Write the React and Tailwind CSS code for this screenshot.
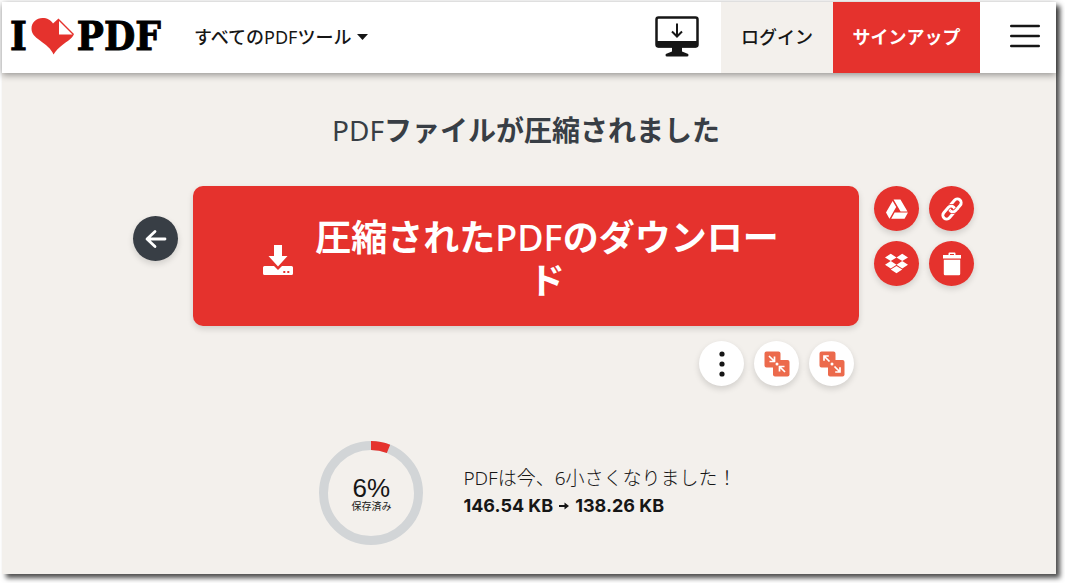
import { FaDropbox, FaGoogleDrive } from "react-icons/fa";

const stats = { saved: 6, before: "146.54 KB", after: "138.26 KB" };

// Latin letters are set lighter than the Japanese around them
function Latin({ children, className = "" }) {
  return (
    <span className={`font-['Noto_Sans','Open_Sans',sans-serif] ${className}`}>
      {children}
    </span>
  );
}

function RoundButton({ label, className, children }) {
  return (
    <button
      type="button"
      aria-label={label}
      className={`flex size-[45px] shrink-0 items-center justify-center rounded-full shadow-[0_3px_6px_rgba(0,0,0,0.14)] cursor-pointer ${className}`}
    >
      {children}
    </button>
  );
}

function Logo() {
  return (
    <a
      href="#home"
      className="flex w-[184px] shrink-0 items-center pb-1 pl-2 font-['DejaVu_Serif_Condensed','DejaVu_Serif',serif] text-[40px] leading-10 font-bold text-black"
    >
      <span className="[-webkit-text-stroke:1px_black]">I</span>
      <svg viewBox="0 0 44 38" className="ml-1 h-[38px] w-11 shrink-0" aria-label="love">
        <path
          d="M22.500 37.500C20 31.500 15 28 9 23.500 3.500 19.500.5 16.500.5 11.500.5 5.500 5.500 1 11.500 1c4.500 0 8.500 2 10.500 5.500L27.500 1.500 43 17c-2 5-6.500 7-11 10.500-4.500 3.500-7 6-9.500 10z"
          fill="#e5322d"
        />
        <path d="M28 4v13.500h13.500z" fill="#fff" />
      </svg>
      <span className="ml-0.5 [-webkit-text-stroke:1px_black]">PDF</span>
    </a>
  );
}

function MonitorIcon() {
  return (
    <svg viewBox="0 0 44 42" className="h-[42px] w-11" fill="none">
      <rect x="1.500" y="1.500" width="41" height="29" rx="2" stroke="#161616" strokeWidth="2.500" />
      <path d="M1.500 25h41v4.500a2 2 0 0 1-2 2h-37a2 2 0 0 1-2-2z" fill="#161616" />
      <path d="M17 31h10v4.500l5 2a1.500 1.500 0 0 1 0 3H12a1.500 1.500 0 0 1 0-3l5-2z" fill="#161616" />
      <path d="M22 7.500v13M17 15.500l5 5 5-5" stroke="#161616" strokeWidth="2" />
    </svg>
  );
}

function Header() {
  return (
    <header className="relative flex h-[71px] items-center bg-white shadow-[0_2px_7px_rgba(0,0,0,0.4)]">
      <Logo />
      <nav className="ml-2 flex-1 pb-0.5">
        <button type="button" className="flex items-center text-lg font-medium cursor-pointer">
          <span>
            すべての<Latin className="font-normal">PDF</Latin>ツール
          </span>
          <svg viewBox="0 0 11 6" className="ml-1.5 h-1.5 w-[11px]" fill="#161616">
            <path d="M0 0h11L5.500 6z" />
          </svg>
        </button>
      </nav>
      <a href="#desktop" aria-label="デスクトップ" className="mr-[22px] pb-0.5">
        <MonitorIcon />
      </a>
      <a
        href="#login"
        className="flex h-full w-28 items-center justify-center bg-[#f3f0ec] pb-1 text-lg font-medium"
      >
        ログイン
      </a>
      <a
        href="#signup"
        className="flex h-full w-[147px] items-center justify-center bg-[#e5322d] pb-1 text-lg font-bold text-white"
      >
        サインアップ
      </a>
      <button type="button" aria-label="メニュー" className="pr-4 pb-1 pl-[30px] cursor-pointer">
        <svg viewBox="0 0 30 24" className="h-6 w-[30px]" stroke="#161616" strokeWidth="2.400" strokeLinecap="round">
          <path d="M1.200 2h27.600M1.200 12h27.600M1.200 22h27.600" />
        </svg>
      </button>
    </header>
  );
}

function BackIcon() {
  return (
    <svg viewBox="0 0 22 20" className="h-5 w-[22px]" fill="none" stroke="#fff" strokeWidth="2.800" strokeLinecap="round" strokeLinejoin="round">
      <path d="M10 2.500L2 10l8 7.500M2.500 10H20" />
    </svg>
  );
}

function DownloadIcon() {
  return (
    <svg viewBox="0 0 30 30" className="h-[30px] w-[30px] shrink-0" fill="#fff">
      <path d="M11 0h8v11h5.500L15 21.500 5.500 11H11z" />
      <path
        fillRule="evenodd"
        d="M1.500 21H11l4 4 4-4h9.500a1.500 1.500 0 0 1 1.500 1.500v6a1.500 1.500 0 0 1-1.500 1.500h-27A1.500 1.500 0 0 1 0 28.500v-6A1.500 1.500 0 0 1 1.500 21zM20.300 26v2h2v-2zM24.300 26v2h2v-2z"
      />
    </svg>
  );
}

function ChainIcon() {
  return (
    <svg viewBox="-12 -12 24 24" className="size-6" fill="none">
      <g transform="rotate(-49)">
        <rect x="-2.500" y="-3.800" width="14.500" height="7.600" rx="3.800" stroke="#fff" strokeWidth="2.900" />
        <rect x="-12" y="-3.800" width="14.500" height="7.600" rx="3.800" stroke="#e5322d" strokeWidth="4.400" />
        <rect x="-12" y="-3.800" width="14.500" height="7.600" rx="3.800" stroke="#fff" strokeWidth="2.900" />
        <path d="M3.500 3.800H1.300a3.800 3.800 0 0 1-3.800-3.800" stroke="#e5322d" strokeWidth="4.400" />
        <path d="M4.500 3.800H1.300a3.800 3.800 0 0 1-3.800-3.800" stroke="#fff" strokeWidth="2.900" />
      </g>
    </svg>
  );
}

function TrashIcon() {
  return (
    <svg viewBox="0 0 18 24" className="h-6 w-[18px]" fill="#fff">
      <path d="M5.500 3V1.500A1 1 0 0 1 6.500.5h5a1 1 0 0 1 1 1V3H18v3.500H0V3zM7 3h4V2H7z" fillRule="evenodd" />
      <path d="M.8 7.800h16.400V22a1.200 1.200 0 0 1-1.200 1.200H2A1.200 1.200 0 0 1 .8 22z" />
    </svg>
  );
}

function MoreIcon() {
  return (
    <svg viewBox="0 0 6 26" className="h-[26px] w-1.5" fill="#161616">
      <circle cx="3" cy="3" r="2.600" />
      <circle cx="3" cy="13" r="2.600" />
      <circle cx="3" cy="23" r="2.600" />
    </svg>
  );
}

// Two overlapping tiles, arrows pointing in (merge) or out (split)
function TilesIcon({ outward }) {
  return (
    <svg viewBox="0 0 26 26" className="size-[26px]">
      <rect x="9" y="9" width="16.500" height="16.500" rx="2" fill="#ec6a4c" />
      <path d="M2.500.5h12a2 2 0 0 1 2 2V9H11a2 2 0 0 0-2 2v5.500H2.500a2 2 0 0 1-2-2v-12a2 2 0 0 1 2-2z" fill="#ec6a4c" />
      <circle cx="13" cy="13" r="1.500" fill="#fff" />
      <path
        d={
          outward
            ? "M10.500 10.500L5 5M5 9.800V5h4.800M15.500 15.500L21 21M21 16.200V21h-4.800"
            : "M5 5l5 5M10.500 5.500v5H5.500M21 21l-5-5M15.500 20.500v-5h5"
        }
        fill="none"
        stroke="#fff"
        strokeWidth="1.700"
      />
    </svg>
  );
}

function SavedRing({ percent }) {
  const length = 2 * Math.PI * 47.5;
  return (
    <div className="relative size-[104px] shrink-0">
      <svg viewBox="0 0 104 104" className="size-full -rotate-90" fill="none" strokeWidth="9">
        <circle cx="52" cy="52" r="47.500" stroke="#d2d5d7" />
        <circle
          cx="52"
          cy="52"
          r="47.500"
          stroke="#e5322d"
          strokeDasharray={`${(length * percent) / 100} ${length}`}
        />
      </svg>
      <div className="absolute inset-0 flex flex-col items-center justify-center pt-0.5">
        <span className="font-['Liberation_Sans',sans-serif] text-[26px] leading-6">{percent}%</span>
        <span className="text-[10px] leading-3">保存済み</span>
      </div>
    </div>
  );
}

export default function App() {
  return (
    <div className="flex min-h-screen bg-white pt-0.5 pr-[9px] pb-[9px] pl-0.5 font-['Noto_Sans_CJK_JP',sans-serif] text-[#161616]">
      <div className="flex-1 bg-[#f3f0ec] shadow-[4px_4px_5px_rgba(0,0,0,0.7)]">
        <Header />
        <main className="pt-9 pr-1.5">
          <h1 className="text-center text-[28px] leading-10 font-bold text-[#383e45]">
            <Latin className="font-normal">PDF</Latin>ファイルが圧縮されました
          </h1>

          <div className="mt-9 grid grid-cols-[1fr_minmax(0,666px)_1fr] gap-x-[15px]">
            <div className="flex justify-end pt-[30px]">
              <RoundButton label="戻る" className="bg-[#383e45]">
                <BackIcon />
              </RoundButton>
            </div>

            <div>
              <button
                type="button"
                className="flex min-h-[140px] w-full items-center rounded-[10px] bg-[#e5322d] px-[70px] pt-2 text-4xl leading-10 font-bold text-white shadow-[0_3px_6px_rgba(0,0,0,0.14)] cursor-pointer"
              >
                <DownloadIcon />
                <span className="flex-1 pb-2 pl-3 leading-10">
                  圧縮された<Latin className="font-medium">PDF</Latin>のダウンロード
                </span>
              </button>
              <div className="mt-[15px] flex justify-end gap-2.5 pr-[5px]">
                <RoundButton label="その他" className="bg-white">
                  <MoreIcon />
                </RoundButton>
                <RoundButton label="結合" className="bg-white">
                  <TilesIcon />
                </RoundButton>
                <RoundButton label="分割" className="bg-white">
                  <TilesIcon outward />
                </RoundButton>
              </div>
            </div>

            <div className="grid grid-cols-[45px_45px] content-start gap-2.5 text-white">
              <RoundButton label="Google ドライブ" className="bg-[#e5322d]">
                <FaGoogleDrive size={22} />
              </RoundButton>
              <RoundButton label="リンク" className="bg-[#e5322d]">
                <ChainIcon />
              </RoundButton>
              <RoundButton label="Dropbox" className="bg-[#e5322d]">
                <FaDropbox size={23} />
              </RoundButton>
              <RoundButton label="削除" className="bg-[#e5322d]">
                <TrashIcon />
              </RoundButton>
            </div>
          </div>

          <section className="mt-[55px] flex items-center justify-center gap-10 pb-7 pl-1">
            <SavedRing percent={stats.saved} />
            <div className="pb-1 text-[19px] leading-7">
              <p className="font-light">
                <Latin>PDF</Latin>は今、<Latin>{stats.saved}</Latin>小さくなりました！
              </p>
              <p className="flex items-center font-['Inter',sans-serif] text-lg leading-7 font-bold">
                {stats.before}
                <svg viewBox="0 0 10 8" className="mx-1.5 h-2 w-2.5" fill="#161616">
                  <path d="M0 2.900h5.500V.5L10 4 5.500 7.500V5.100H0z" />
                </svg>
                {stats.after}
              </p>
            </div>
          </section>
        </main>
      </div>
    </div>
  );
}
